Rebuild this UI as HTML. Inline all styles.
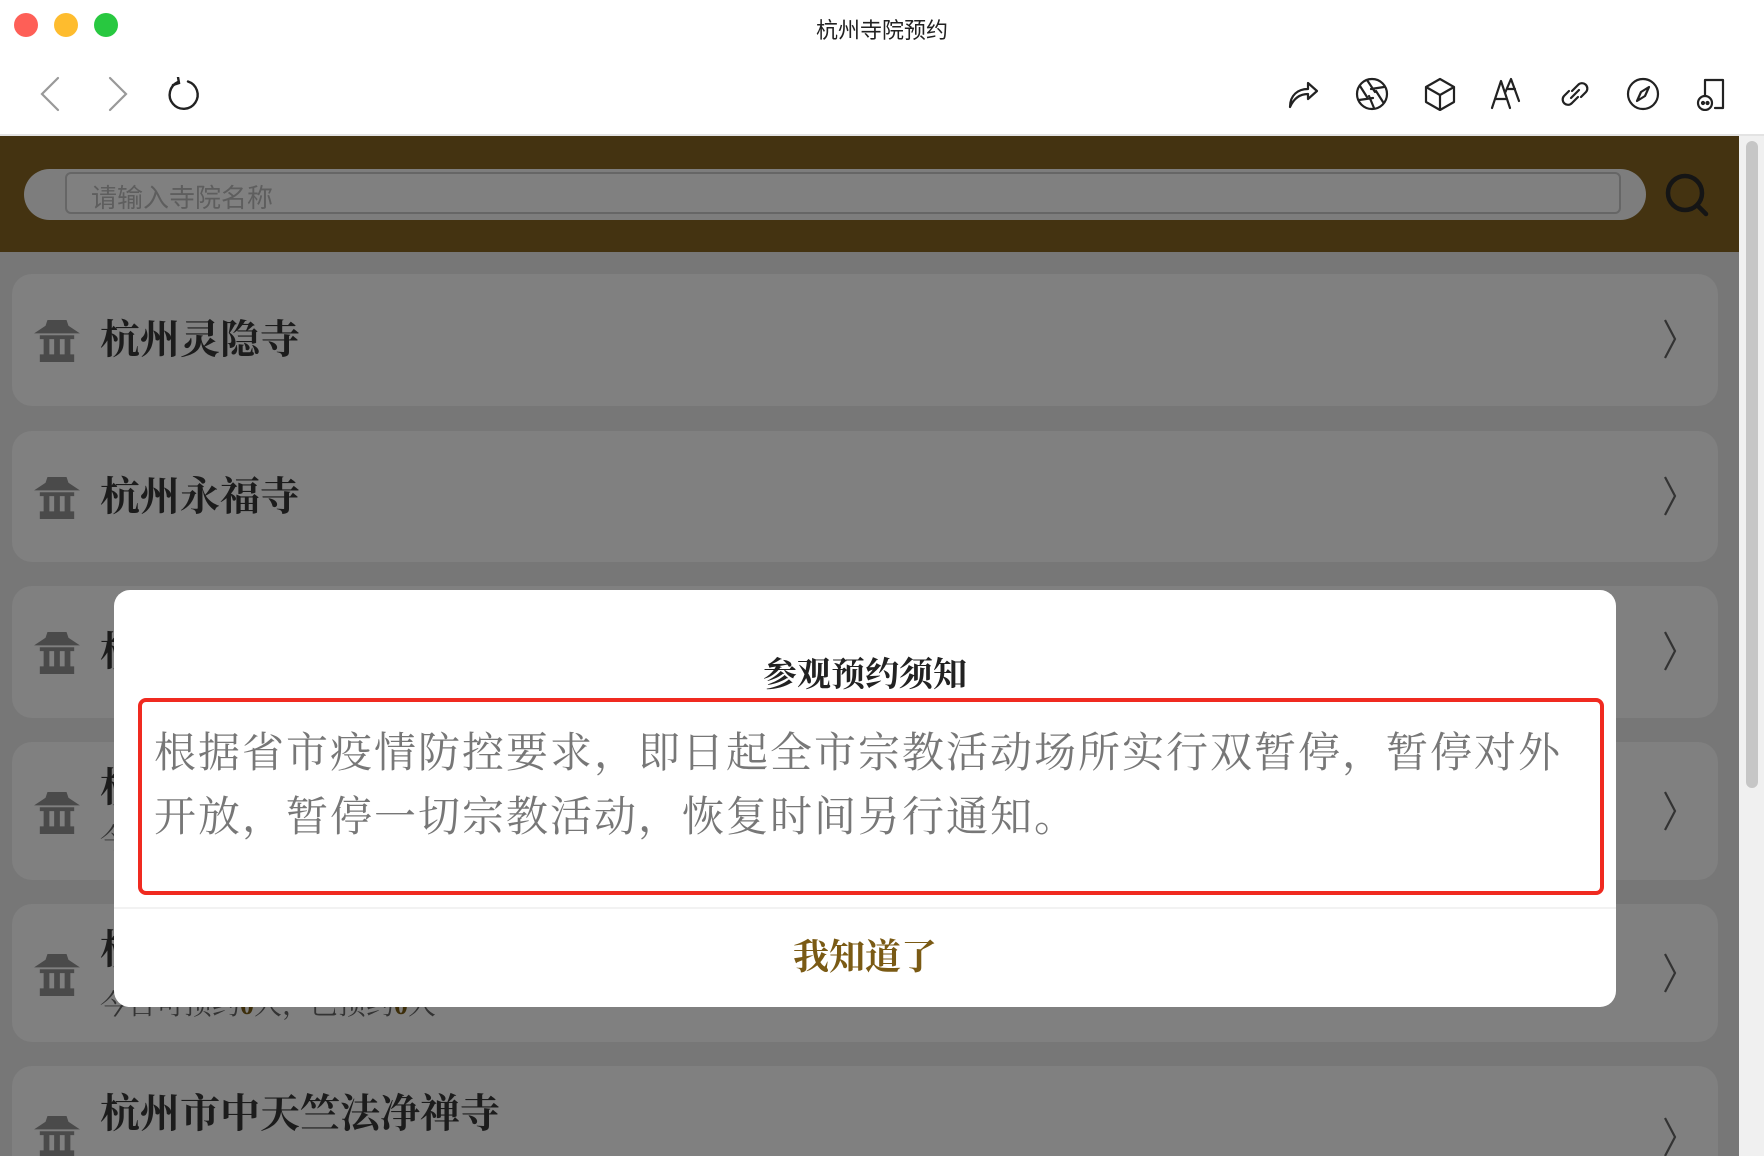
<!DOCTYPE html>
<html><head><meta charset="utf-8">
<style>
*{margin:0;padding:0;box-sizing:border-box}
html,body{width:1764px;height:1156px;overflow:hidden}
body{background:#fff;position:relative;font-family:"Liberation Sans","Noto Sans CJK SC",sans-serif}
.abs{position:absolute}
.dot{position:absolute;top:13px;width:24px;height:24px;border-radius:50%}
.ico{position:absolute;top:77px;width:34px;height:34px}
.ico svg{width:34px;height:34px;fill:none;stroke:#222;stroke-width:2.2;stroke-linecap:round;stroke-linejoin:round}
.card{position:absolute;left:12px;width:1706px;background:#808080;border-radius:20px;overflow:hidden}
.card .t{position:absolute;left:88px;font-family:"Liberation Serif","Noto Serif CJK SC",serif;font-weight:bold;font-size:40px;color:#1c1c1c;line-height:1}
.card .s{position:absolute;left:88px;font-family:"Liberation Serif","Noto Serif CJK SC",serif;font-size:28px;color:#333;line-height:1}
.card .arr{position:absolute;right:40px;width:16px;height:42px}
.tm{position:absolute;left:22px;width:46px;height:42px}
</style></head><body>
<div class="dot" style="left:14px;background:#fe5f57"></div>
<div class="dot" style="left:54px;background:#febc2e"></div>
<div class="dot" style="left:94px;background:#28c840"></div>
<div class="abs" style="left:0;width:1764px;top:13px;text-align:center;font-size:22px;color:#222">杭州寺院预约</div>

<svg class="abs" style="left:36px;top:76px" width="100" height="36" fill="none" stroke="#999" stroke-width="2.2" stroke-linecap="round"><path d="M22 2 L6 18 L22 34"/><path d="M74 2 L90 18 L74 34"/></svg>
<svg class="abs" style="left:166px;top:77px" width="36" height="36" fill="none" stroke="#222" stroke-width="2.4" stroke-linecap="round"><path d="M12 5 A14 14 0 1 0 22 4.5"/><path d="M12 0 L13 6 L7 8"/></svg>

<div class="ico" style="left:1286px"><svg viewBox="0 0 34 34"><path d="M4 30 C4 18 12 12 22 12 L22 6 L31 14 L22 22 L22 17 C14 17 8 21 4 30Z"/></svg></div>
<div class="ico" style="left:1355px"><svg viewBox="0 0 34 34"><circle cx="17" cy="17" r="15"/><path d="M12 3 L20 15 M29 10 L16 12 M28 25 L21 14 M19 31 L14 19 M4 23 L18 21 M5 9 L12 20"/></svg></div>
<div class="ico" style="left:1423px"><svg viewBox="0 0 34 34"><path d="M17 2 L31 10 L31 25 L17 33 L3 25 L3 10Z M3 10 L17 18 L31 10 M17 18 L17 33"/></svg></div>
<div class="ico" style="left:1490px"><svg viewBox="0 0 34 34"><path d="M2 31 L11 4 L20 31 M5 22 L17 22 M15 16 L21 2 L29 24 M18 12 L25 12"/></svg></div>
<div class="ico" style="left:1558px"><svg viewBox="0 0 34 34"><path d="M14 14 L20 8 A5 5 0 0 1 28 15 L23 20 M20 20 L14 26 A5 5 0 0 1 6 19 L11 14 M13 21 L21 13"/></svg></div>
<div class="ico" style="left:1626px"><svg viewBox="0 0 34 34"><circle cx="17" cy="17" r="15"/><path d="M23 10 L19 19 L11 24 L15 15Z"/></svg></div>
<div class="ico" style="left:1695px"><svg viewBox="0 0 34 34"><path d="M10 18 L10 3 L28 3 L28 31 L20 31"/><circle cx="10" cy="26" r="7"/><circle cx="8" cy="26" r="1" fill="#222"/><circle cx="12.5" cy="26" r="1" fill="#222"/></svg></div>

<div class="abs" style="left:0;top:134px;width:1764px;height:2px;background:#e3e3e3"></div>
<div class="abs" style="left:0;top:136px;width:1739px;height:116px;background:#443311"></div>
<div class="abs" style="left:24px;top:169px;width:1622px;height:51px;background:#7d7d7d;border-radius:26px"></div>
<div class="abs" style="left:65px;top:172px;width:1556px;height:42px;border:2px solid #666;border-radius:6px;background:#808080"></div>
<div class="abs" style="left:91px;top:178px;font-size:26px;color:#5e5e5e">请输入寺院名称</div>
<svg class="abs" style="left:1664px;top:172px" width="46" height="46" fill="none" stroke="#151515" stroke-width="4.5" stroke-linecap="round"><circle cx="21" cy="21" r="17"/><path d="M34 34 L42 42"/></svg>

<div class="abs" style="left:0;top:252px;width:1739px;height:904px;background:#777"></div>
<div class="abs" style="left:1739px;top:136px;width:25px;height:1020px;background:#f0f0f0"></div>
<div class="abs" style="left:1746px;top:141px;width:12px;height:647px;background:#c6c6c6;border-radius:6px"></div>

<div class="card" style="top:274px;height:132px"><svg class="tm" style="top:46px" viewBox="0 0 48 44"><path d="M14 0 L34 0 L36 6 L48 14 L0 14 L12 6Z M6 16 L42 16 L42 20 L6 20Z M10 20 H16 V36 H10Z M21 20 H27 V36 H21Z M32 20 H38 V36 H32Z M6 36 H42 V44 H6Z" fill="#4a4a4a"/></svg><div class="t" style="top:46px">杭州灵隐寺</div><svg class="arr" style="top:44px" viewBox="0 0 16 42"><path d="M3 2 L13 21 L3 40" fill="none" stroke="#333" stroke-width="2.2"/></svg></div>
<div class="card" style="top:431px;height:131px"><svg class="tm" style="top:46px" viewBox="0 0 48 44"><path d="M14 0 L34 0 L36 6 L48 14 L0 14 L12 6Z M6 16 L42 16 L42 20 L6 20Z M10 20 H16 V36 H10Z M21 20 H27 V36 H21Z M32 20 H38 V36 H32Z M6 36 H42 V44 H6Z" fill="#4a4a4a"/></svg><div class="t" style="top:46px">杭州永福寺</div><svg class="arr" style="top:44px" viewBox="0 0 16 42"><path d="M3 2 L13 21 L3 40" fill="none" stroke="#333" stroke-width="2.2"/></svg></div>
<div class="card" style="top:586px;height:132px"><svg class="tm" style="top:46px" viewBox="0 0 48 44"><path d="M14 0 L34 0 L36 6 L48 14 L0 14 L12 6Z M6 16 L42 16 L42 20 L6 20Z M10 20 H16 V36 H10Z M21 20 H27 V36 H21Z M32 20 H38 V36 H32Z M6 36 H42 V44 H6Z" fill="#4a4a4a"/></svg><div class="t" style="top:46px">杭州</div><svg class="arr" style="top:44px" viewBox="0 0 16 42"><path d="M3 2 L13 21 L3 40" fill="none" stroke="#333" stroke-width="2.2"/></svg></div>
<div class="card" style="top:742px;height:138px"><svg class="tm" style="top:50px" viewBox="0 0 48 44"><path d="M14 0 L34 0 L36 6 L48 14 L0 14 L12 6Z M6 16 L42 16 L42 20 L6 20Z M10 20 H16 V36 H10Z M21 20 H27 V36 H21Z M32 20 H38 V36 H32Z M6 36 H42 V44 H6Z" fill="#4a4a4a"/></svg><div class="t" style="top:26px">杭州</div><div class="s" style="top:84px">今日</div><svg class="arr" style="top:48px" viewBox="0 0 16 42"><path d="M3 2 L13 21 L3 40" fill="none" stroke="#333" stroke-width="2.2"/></svg></div>
<div class="card" style="top:904px;height:138px"><svg class="tm" style="top:50px" viewBox="0 0 48 44"><path d="M14 0 L34 0 L36 6 L48 14 L0 14 L12 6Z M6 16 L42 16 L42 20 L6 20Z M10 20 H16 V36 H10Z M21 20 H27 V36 H21Z M32 20 H38 V36 H32Z M6 36 H42 V44 H6Z" fill="#4a4a4a"/></svg><div class="t" style="top:26px">杭州</div><div class="s" style="top:88px">今日可预约<b style="color:#3d2e0a">0</b>人，已预约<b style="color:#3d2e0a">0</b>人</div><svg class="arr" style="top:48px" viewBox="0 0 16 42"><path d="M3 2 L13 21 L3 40" fill="none" stroke="#333" stroke-width="2.2"/></svg></div>
<div class="card" style="top:1066px;height:90px;border-radius:20px 20px 0 0"><svg class="tm" style="top:50px" viewBox="0 0 48 44"><path d="M14 0 L34 0 L36 6 L48 14 L0 14 L12 6Z M6 16 L42 16 L42 20 L6 20Z M10 20 H16 V36 H10Z M21 20 H27 V36 H21Z M32 20 H38 V36 H32Z M6 36 H42 V44 H6Z" fill="#4a4a4a"/></svg><div class="t" style="top:28px">杭州市中天竺法净禅寺</div><svg class="arr" style="top:50px" viewBox="0 0 16 42"><path d="M3 2 L13 21 L3 40" fill="none" stroke="#333" stroke-width="2.2"/></svg></div>

<div class="abs" style="left:114px;top:590px;width:1502px;height:417px;background:#fff;border-radius:16px"></div>
<div class="abs" style="left:114px;top:655px;width:1502px;text-align:center;font-family:'Liberation Serif','Noto Serif CJK SC',serif;font-weight:bold;font-size:34px;color:#222;line-height:42px">参观预约须知</div>
<div class="abs" style="left:138px;top:698px;width:1466px;height:197px;border:4px solid #f02a20;border-radius:8px"></div>
<div class="abs" style="left:154px;top:718px;width:1440px;white-space:nowrap;font-family:'Noto Serif CJK SC',serif;font-size:42px;letter-spacing:2px;color:#777;line-height:64px">根据省市疫情防控要求，即日起全市宗教活动场所实行双暂停，暂停对外<br>开放，暂停一切宗教活动，恢复时间另行通知。</div>
<div class="abs" style="left:114px;top:907px;width:1502px;height:2px;background:#f2f2f2"></div>
<div class="abs" style="left:114px;top:936px;width:1502px;text-align:center;font-family:'Liberation Serif','Noto Serif CJK SC',serif;font-weight:bold;font-size:36px;color:#7a5a14;line-height:42px">我知道了</div>
</body></html>
